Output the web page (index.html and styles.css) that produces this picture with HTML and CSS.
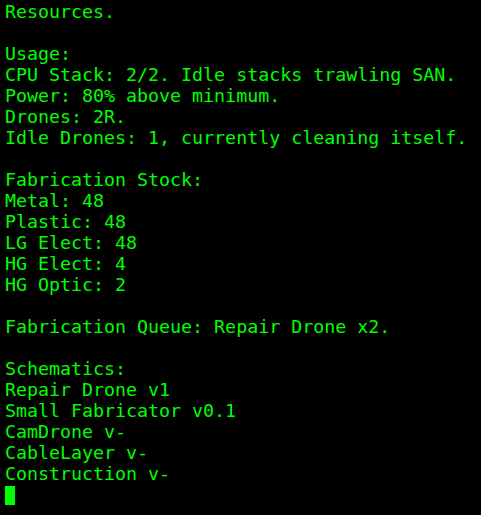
FILE: index.html
```html
<!DOCTYPE html>
<html lang="en">
<head>
    <meta charset="UTF-8">
    <title>Terminal</title>
    <link rel="stylesheet" href="styles.css">
</head>
<body>
    <pre class="terminal">Resources.

Usage:
CPU Stack: 2/2. Idle stacks trawling SAN.
Power: 80% above minimum.
Drones: 2R.
Idle Drones: 1, currently cleaning itself.

Fabrication Stock:
Metal: 48
Plastic: 48
LG Elect: 48
HG Elect: 4
HG Optic: 2

Fabrication Queue: Repair Drone x2.

Schematics:
Repair Drone v1
Small Fabricator v0.1
CamDrone v-
CableLayer v-
Construction v-
<span class="cursor"></span></pre>
</body>
</html>
```

FILE: styles.css
```css
html, body {
    margin: 0;
    padding: 0;
    background: #000;
    height: 100%;
}
.terminal {
    margin: 0;
    padding: 1px 5px;
    color: #00ff00;
    font-family: "DejaVu Sans Mono", monospace;
    font-size: 18.3px;
    line-height: 21px;
}
.cursor {
    display: inline-block;
    width: 10px;
    height: 19px;
    background: #00ff00;
    vertical-align: -4px;
}
```
